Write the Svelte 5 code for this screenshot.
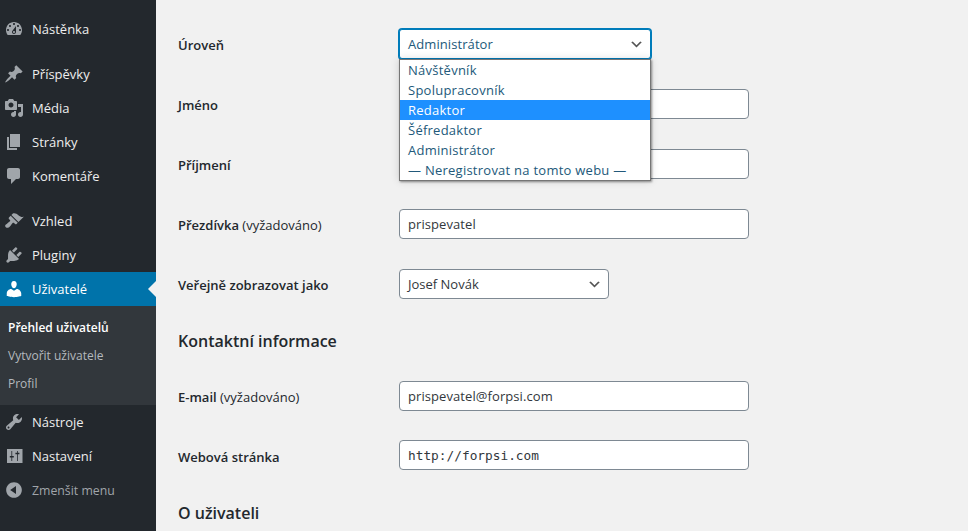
<script>
  const icons = {
    dashboard: "M3.76 16h12.48c1.1-1.37 1.76-3.11 1.76-5 0-4.42-3.58-8-8-8s-8 3.58-8 8c0 1.89.66 3.63 1.76 5zM10 4c.55 0 1 .45 1 1s-.45 1-1 1-1-.45-1-1 .45-1 1-1zM6 6c.55 0 1 .45 1 1s-.45 1-1 1-1-.45-1-1 .45-1 1-1zm8 0c.55 0 1 .45 1 1s-.45 1-1 1-1-.45-1-1 .45-1 1-1zm-5.37 5.55L12 7v6c0 1.1-.9 2-2 2s-2-.9-2-2c0-.57.24-1.08.63-1.45zM4 10c.55 0 1 .45 1 1s-.45 1-1 1-1-.45-1-1 .45-1 1-1zm12 0c.55 0 1 .45 1 1s-.45 1-1 1-1-.45-1-1 .45-1 1-1zm-5 3c0-.55-.45-1-1-1s-1 .45-1 1 .45 1 1 1 1-.45 1-1z",
    pin: "M10.44 3.02l1.82-1.82 6.36 6.35-1.83 1.82c-1.05-.68-2.48-.57-3.41.36l-.75.75c-.92.93-1.04 2.35-.35 3.41l-1.83 1.82-2.41-2.41-2.8 2.79c-.42.42-3.38 2.71-3.8 2.29s1.86-3.39 2.28-3.81l2.79-2.79L4.1 9.36l1.83-1.82c1.05.69 2.48.57 3.4-.36l.75-.75c.93-.92 1.05-2.35.36-3.41z",
    media: "M13 11V4c0-.55-.45-1-1-1h-1.67L9 1H5L3.67 3H2c-.55 0-1 .45-1 1v7c0 .55.45 1 1 1h10c.55 0 1-.45 1-1zM7 4.5c1.38 0 2.5 1.12 2.5 2.5S8.38 9.5 7 9.5 4.5 8.38 4.5 7 5.62 4.5 7 4.5zM14 6h5v10.5c0 1.38-1.12 2.5-2.5 2.5S14 17.88 14 16.5s1.12-2.5 2.5-2.5c.17 0 .34.02.5.05V9h-3V6zm-4 8.05V13h2v3.5c0 1.38-1.12 2.5-2.5 2.5S7 17.88 7 16.5 8.12 14 9.5 14c.17 0 .34.02.5.05z",
    page: "M6 15V2h10v13H6zm-1 1h8v2H3V5h2v11z",
    comment: "M5 2h9c1.1 0 2 .9 2 2v7c0 1.1-.9 2-2 2h-2l-5 5v-5H5c-1.1 0-2-.9-2-2V4c0-1.1.9-2 2-2z",
    brush: "M14.48 11.06L7.41 3.99l1.5-1.5c.5-.56 2.3-.47 3.51.32 1.21.8 1.43 1.28 2.91 2.1 1.18.64 2.45 1.26 4.45.85zm-.71.71L6.7 4.7 4.93 6.47c-.39.39-.39 1.02 0 1.41l1.06 1.06c.39.39.39 1.03 0 1.42-.6.6-1.43 1.11-2.21 1.69-.35.26-.7.53-1.01.84C1.43 13.23.4 14.79 1.8 16.19s2.96.37 4.29-.97c.31-.31.58-.66.84-1.01.58-.78 1.09-1.61 1.69-2.21.39-.39 1.03-.39 1.42 0l1.06 1.06c.39.39 1.02.39 1.41 0z",
    plugin: "M13.11 4.36L9.87 7.6 8 5.73l3.24-3.24c.35-.34 1.05-.2 1.56.32.52.51.66 1.21.31 1.55zm-8 1.77l.91-1.12 9.01 9.01-1.19.84c-.71.71-2.63 1.16-3.82 1.16H6.14L4.9 17.26c-.59.59-1.54.59-2.12 0-.59-.58-.59-1.53 0-2.12l1.24-1.24v-3.88c0-1.13.4-3.19 1.09-3.89zm7.26 3.97l3.24-3.24c.34-.35 1.04-.21 1.55.31.52.51.66 1.21.31 1.55l-3.24 3.25z",
    users: "M10 9.25c-2.27 0-2.73-3.44-2.73-3.44C7 4.02 7.82 2 9.97 2c2.16 0 2.98 2.02 2.71 3.81 0 0-.41 3.44-2.68 3.44zm0 2.57L12.72 10c2.39 0 4.52 2.33 4.52 4.53v2.49s-3.65 1.13-7.24 1.13c-3.65 0-7.24-1.13-7.24-1.13v-2.49c0-2.25 1.94-4.48 4.47-4.48z",
    tools: "M16.68 9.77c-1.34 1.34-3.3 1.67-4.95.99l-5.41 6.52c-.99.99-2.59.99-3.58 0s-.99-2.59 0-3.57l6.52-5.42c-.68-1.65-.35-3.61.99-4.95 1.28-1.28 3.12-1.62 4.72-1.06l-2.89 2.89 2.82 2.82 2.86-2.87c.53 1.58.18 3.39-1.08 4.65zM3.81 16.21c.4.39 1.04.39 1.43 0 .4-.4.4-1.04 0-1.43-.39-.4-1.03-.4-1.43 0-.39.39-.39 1.03 0 1.43z",
    settings: "M3 3h15.5v14H3zM7.4 5h.8v5h1.6v1.4H8.2V15h-.8v-3.6H5.8V10h1.6zM13 5h.8v1.8h1.6v1.4h-1.6V15H13V8.2h-1.6V6.8H13z",
    collapse: "M10 2.16c4.33 0 7.84 3.51 7.84 7.84s-3.51 7.84-7.84 7.84S2.16 14.33 2.16 10 5.71 2.16 10 2.16zm2 11.72V6.12L6.18 9.97z"
  };

  const menuTop = [
    { icon: "dashboard", label: "Nástěnka", sep: true },
    { icon: "pin", label: "Příspěvky" },
    { icon: "media", label: "Média" },
    { icon: "page", label: "Stránky" },
    { icon: "comment", label: "Komentáře", sep: true },
    { icon: "brush", label: "Vzhled" },
    { icon: "plugin", label: "Pluginy" }
  ];
  const submenu = ["Přehled uživatelů", "Vytvořit uživatele", "Profil"];
  const roles = ["Návštěvník", "Spolupracovník", "Redaktor", "Šéfredaktor", "Administrátor", "— Neregistrovat na tomto webu —"];
</script>

{#snippet icon(name)}
  <svg class="icon" viewBox="0 0 20 20" width="20" height="20" aria-hidden="true">
    <path fill-rule="evenodd" d={icons[name]} />
  </svg>
{/snippet}

{#snippet chevron()}
  <svg class="chevron" viewBox="0 0 20 20" width="15" height="15" aria-hidden="true">
    <path d="M5 6l5 5 5-5 2 1-7 7-7-7 2-1z" />
  </svg>
{/snippet}

<div class="page">
  <nav class="sidebar">
    {#each menuTop as item}
      <a class="item" class:sep={item.sep} href="#top">{@render icon(item.icon)}<span>{item.label}</span></a>
    {/each}
    <a class="item current" href="#top">{@render icon("users")}<span>Uživatelé</span></a>
    <div class="sub">
      {#each submenu as s, i}
        <a class:active={i === 0} href="#top">{s}</a>
      {/each}
    </div>
    <a class="item" href="#top">{@render icon("tools")}<span>Nástroje</span></a>
    <a class="item" href="#top">{@render icon("settings")}<span>Nastavení</span></a>
    <a class="item collapse" href="#top">{@render icon("collapse")}<span>Zmenšit menu</span></a>
  </nav>

  <main class="content">
    <div class="row">
      <span class="label">Úroveň</span>
      <div class="open-select">
        <div class="select focus"><span>Administrátor</span>{@render chevron()}</div>
        <ul class="options">
          {#each roles as r, i}
            <li class:hl={i === 2}>{r}</li>
          {/each}
        </ul>
      </div>
    </div>
    <div class="row">
      <span class="label">Jméno</span>
      <input class="text" value="" />
    </div>
    <div class="row">
      <span class="label">Příjmení</span>
      <input class="text" value="" />
    </div>
    <div class="row">
      <span class="label">Přezdívka <small>(vyžadováno)</small></span>
      <input class="text" value="prispevatel" />
    </div>
    <div class="row">
      <span class="label">Veřejně zobrazovat jako</span>
      <div class="select name"><span>Josef Novák</span>{@render chevron()}</div>
    </div>

    <h2 class="contact">Kontaktní informace</h2>

    <div class="row">
      <span class="label">E-mail <small>(vyžadováno)</small></span>
      <input class="text" value="prispevatel@forpsi.com" />
    </div>
    <div class="row tight">
      <span class="label web">Webová stránka</span>
      <input class="text mono" value="http://forpsi.com" />
    </div>

    <h2 class="about">O uživateli</h2>
  </main>
</div>

<style>
  :global(html), :global(body) {
    margin: 0;
    height: 100%;
    overflow: hidden;
    background: #f1f1f1;
  }

  .page {
    display: flex;
    height: 531px;
    overflow: hidden;
    font-family: "Open Sans", "Noto Sans", sans-serif;
    font-size: 13px;
    color: #32373c;
    background: #f1f1f1;
  }

  .sidebar {
    flex: 0 0 156px;
    box-sizing: border-box;
    padding-top: 12px;
    background: #23282d;
  }

  .item {
    display: flex;
    align-items: center;
    position: relative;
    height: 34px;
    padding-left: 4px;
    color: #eee;
    text-decoration: none;
    font-size: 13px;
  }
  .item.sep { margin-bottom: 11px; }
  .item span { margin-left: 8px; }

  .icon { flex: none; fill: #a0a5aa; }

  .current {
    background: #0073aa;
    color: #fff;
  }
  .current .icon { fill: #fff; }
  .current::after {
    content: "";
    position: absolute;
    right: 0;
    top: 50%;
    margin-top: -8px;
    border: 8px solid transparent;
    border-right-color: #f1f1f1;
    border-left-width: 0;
  }

  .collapse { color: #a0a5aa; font-size: 12.3px; }

  .sub {
    padding: 8px 0 7px;
    background: #32373c;
  }
  .sub a {
    display: block;
    height: 28px;
    line-height: 28px;
    padding-left: 8px;
    font-size: 12px;
    color: #b4b9be;
    text-decoration: none;
  }
  .sub a.active {
    color: #fff;
    font-weight: 600;
  }

  .content {
    flex: 1;
    padding: 14px 0 0 22px;
  }

  .row {
    display: flex;
    align-items: center;
    height: 30px;
    padding: 15px 0;
  }
  .row.tight { padding-top: 14px; }

  .label {
    flex: 0 0 221px;
    padding-top: 2px;
    font-weight: 600;
    font-size: 13px;
    color: #23282d;
  }
  .label.web { padding-top: 4px; }
  .label small {
    font-size: 13px;
    font-weight: 500;
  }

  .text, .select {
    box-sizing: border-box;
    height: 30px;
    border: 1px solid #7e8993;
    border-radius: 4px;
    background: #fff;
    font: inherit;
    color: #32373c;
  }

  .text {
    display: block;
    width: 350px;
    padding: 0 8px;
    outline: none;
    letter-spacing: 0.08px;
  }
  .mono {
    font-family: "DejaVu Sans Mono", "Liberation Mono", monospace;
    font-size: 12.8px;
    letter-spacing: 0;
  }

  .select {
    display: flex;
    align-items: center;
    justify-content: space-between;
    padding: 0 6px 0 8px;
  }
  .select.name { width: 210px; }
  .select.focus {
    border-color: #007cba;
    box-shadow: 0 0 0 1px #007cba;
    border-radius: 3px;
    color: #22597a;
    letter-spacing: 0.08px;
  }
  .chevron { fill: #555; }

  .open-select {
    position: relative;
    width: 252px;
  }

  .options {
    position: absolute;
    left: 0;
    right: 0;
    top: 30px;
    z-index: 2;
    box-sizing: border-box;
    margin: 0;
    padding: 0;
    list-style: none;
    background: #fff;
    border: 1px solid #767676;
    box-shadow: 1px 1px 2px rgba(0, 0, 0, 0.4), 0 0 8px rgba(0, 0, 0, 0.15);
  }
  .options li {
    height: 20px;
    line-height: 20px;
    padding-left: 8px;
    color: #22597a;
    letter-spacing: 0.25px;
  }
  .options li.hl {
    background: #1e90ff;
    color: #fff;
  }

  h2 {
    margin: 0;
    font-size: 16px;
    font-weight: 600;
    color: #23282d;
  }
  .contact { line-height: 22px; margin: 16px 0 14px; }
  .about { line-height: 22px; margin-top: 17px; }
</style>
